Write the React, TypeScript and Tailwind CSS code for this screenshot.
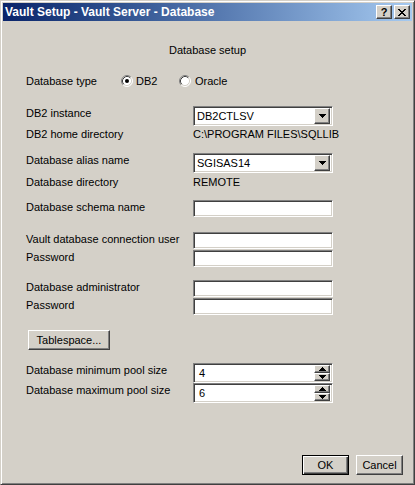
const raised =
  "border border-t-white border-l-white border-r-[#404040] border-b-[#404040] shadow-[inset_-1px_-1px_#808080,inset_1px_1px_#d4d0c8] bg-[#d4d0c8]";
const sunken =
  "border border-t-[#808080] border-l-[#808080] border-r-white border-b-white shadow-[inset_1px_1px_#404040,inset_-1px_-1px_#d4d0c8] bg-white";

function DownArrow() {
  return (
    <svg width="7" height="4" viewBox="0 0 7 4" shapeRendering="crispEdges">
      <rect x="0" y="0" width="7" height="1" fill="#000" />
      <rect x="1" y="1" width="5" height="1" fill="#000" />
      <rect x="2" y="2" width="3" height="1" fill="#000" />
      <rect x="3" y="3" width="1" height="1" fill="#000" />
    </svg>
  );
}

function SmallArrow({ up }: { up?: boolean }) {
  return (
    <svg width="7" height="4" viewBox="0 0 7 4" shapeRendering="crispEdges" className={up ? "rotate-180" : ""}>
      <rect x="0" y="0" width="7" height="1" fill="#000" />
      <rect x="1" y="1" width="5" height="1" fill="#000" />
      <rect x="2" y="2" width="3" height="1" fill="#000" />
      <rect x="3" y="3" width="1" height="1" fill="#000" />
    </svg>
  );
}

function Radio({ checked }: { checked?: boolean }) {
  return (
    <svg width="12" height="12" viewBox="0 0 12 12" className="shrink-0">
      <circle cx="6" cy="6" r="5" fill="#fff" />
      <path d="M2.11 9.89 A5.5 5.5 0 0 1 9.89 2.11" fill="none" stroke="#808080" strokeWidth="1" />
      <path d="M9.89 2.11 A5.5 5.5 0 0 1 2.11 9.89" fill="none" stroke="#fff" strokeWidth="1" />
      <path d="M2.82 9.18 A4.5 4.5 0 0 1 9.18 2.82" fill="none" stroke="#404040" strokeWidth="1" />
      <path d="M9.18 2.82 A4.5 4.5 0 0 1 2.82 9.18" fill="none" stroke="#d4d0c8" strokeWidth="1" />
      {checked && <circle cx="6" cy="6" r="2" fill="#000" />}
    </svg>
  );
}

function Combo({ value }: { value: string }) {
  return (
    <div className={`flex h-[20px] w-[140px] items-center p-[2px] ${sunken}`}>
      <span className="flex-1 pl-[1px] leading-[14px]">{value}</span>
      <div className={`flex h-[16px] w-[16px] items-center justify-center ${raised}`}>
        <DownArrow />
      </div>
    </div>
  );
}

function Spin({ value }: { value: string }) {
  return (
    <div className={`flex h-[20px] w-[140px] items-center p-[2px] ${sunken}`}>
      <span className="flex-1 pl-[3px] leading-[14px]">{value}</span>
      <div className="flex flex-col">
        <div className={`flex h-[8px] w-[16px] items-center justify-center ${raised}`}>
          <SmallArrow up />
        </div>
        <div className={`flex h-[8px] w-[16px] items-center justify-center ${raised}`}>
          <SmallArrow />
        </div>
      </div>
    </div>
  );
}

function Edit() {
  return <div className={`h-[17px] w-[140px] ${sunken}`} />;
}

function Field({ label, children, className }: { label: string; children: React.ReactNode; className: string }) {
  return (
    <div className={`flex items-start ${className}`}>
      <div className="w-[167px] leading-[14px]">{label}</div>
      {children}
    </div>
  );
}

export default function App() {
  return (
    <div
      className="flex h-[485px] w-[415px] flex-col border border-t-[#d4d0c8] border-l-[#d4d0c8] border-r-[#404040] border-b-[#404040] bg-[#d4d0c8] p-[2px] text-[11px] text-black shadow-[inset_1px_1px_white,inset_-1px_-1px_#808080]"
      style={{ fontFamily: "'Liberation Sans', Arial, sans-serif" }}
    >
      {/* Title bar */}
      <div className="flex h-[18px] items-center bg-gradient-to-r from-[#0a246a] to-[#a6caf0] pl-[2px] pr-[2px]">
        <span className="flex-1 text-[12px] font-bold leading-[14px] text-white">
          Vault Setup - Vault Server - Database
        </span>
        <div className="flex gap-[2px]">
          <div className={`flex h-[14px] w-[16px] items-center justify-center text-[11px] font-bold leading-none ${raised}`}>
            ?
          </div>
          <div className={`flex h-[14px] w-[16px] items-center justify-center ${raised}`}>
            <svg width="8" height="7" viewBox="0 0 8 7" shapeRendering="crispEdges">
              <path d="M0 0h2v1h1v1h2v-1h1v-1h2v1h-1v1h-1v1h-1v1h1v1h1v1h1v1h-2v-1h-1v-1h-2v1h-1v1h-2v-1h1v-1h1v-1h1v-1h-1v-1h-1v-1h-1z" fill="#000" />
            </svg>
          </div>
        </div>
      </div>

      {/* Body */}
      <div className="flex flex-col pl-[23px]">
        <div className="mt-[22px] pr-[23px] text-center leading-[14px]">Database setup</div>

        <div className="mt-[17px] flex h-[14px] items-center">
          <div className="w-[95px] leading-[14px]">Database type</div>
          <div className="flex w-[58px] items-center gap-[3px]">
            <Radio checked />
            <span className="leading-[14px]">DB2</span>
          </div>
          <div className="flex items-center gap-[4px]">
            <Radio />
            <span className="leading-[14px]">Oracle</span>
          </div>
        </div>

        <Field label="DB2 instance" className="mt-[18px]">
          <Combo value="DB2CTLSV" />
        </Field>
        <Field label="DB2 home directory" className="mt-[1px]">
          <span className="leading-[14px]">C:\PROGRAM FILES\SQLLIB</span>
        </Field>

        <Field label="Database alias name" className="mt-[12px]">
          <Combo value="SGISAS14" />
        </Field>
        <Field label="Database directory" className="mt-[2px]">
          <span className="leading-[14px]">REMOTE</span>
        </Field>

        <Field label="Database schema name" className="mt-[11px]">
          <Edit />
        </Field>

        <Field label="Vault database connection user" className="mt-[15px]">
          <Edit />
        </Field>
        <Field label="Password" className="mt-[1px]">
          <Edit />
        </Field>

        <Field label="Database administrator" className="mt-[13px]">
          <Edit />
        </Field>
        <Field label="Password" className="mt-[1px]">
          <Edit />
        </Field>

        <div className="mt-[15px] pl-[2px]">
          <button type="button" className={`flex h-[20px] w-[82px] items-center justify-center leading-[14px] ${raised}`}>
            Tablespace...
          </button>
        </div>

        <Field label="Database minimum pool size" className="mt-[13px]">
          <Spin value="4" />
        </Field>
        <Field label="Database maximum pool size" className="">
          <Spin value="6" />
        </Field>
      </div>

      {/* Footer buttons */}
      <div className="mt-[52px] flex justify-end gap-[7px] pr-[9px]">
        <button
          type="button"
          className="flex h-[20px] w-[47px] items-center justify-center border border-black bg-[#d4d0c8] leading-[14px] shadow-[inset_1px_1px_white,inset_-1px_-1px_#404040,inset_-2px_-2px_#808080]"
        >
          OK
        </button>
        <button type="button" className={`flex h-[20px] w-[47px] items-center justify-center leading-[14px] ${raised}`}>
          Cancel
        </button>
      </div>
    </div>
  );
}
